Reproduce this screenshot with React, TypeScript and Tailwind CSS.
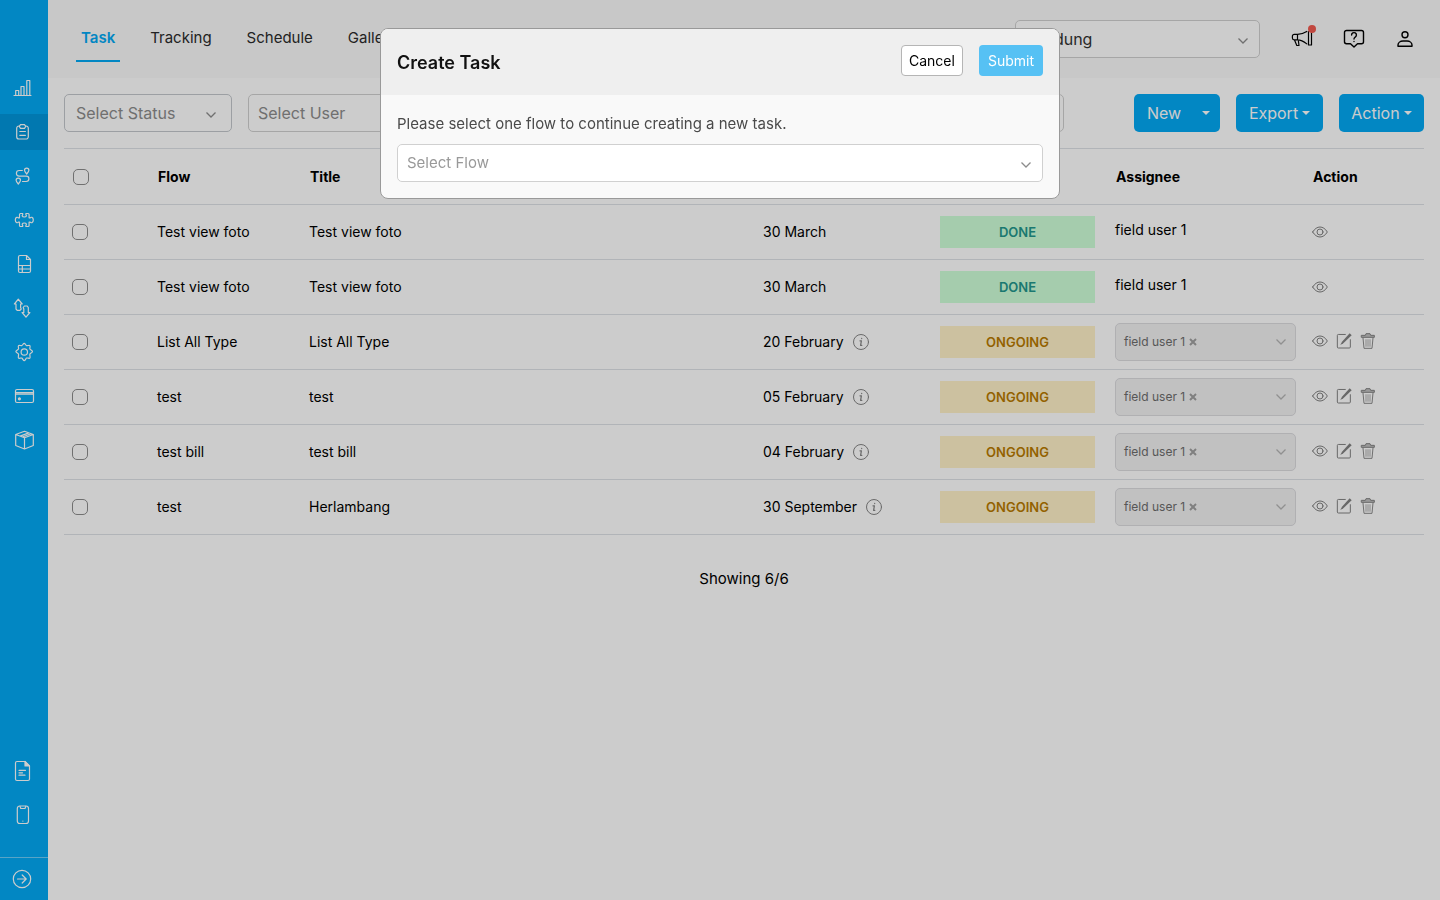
import { useState } from "react";
import type { ReactNode } from "react";
import clsx from "clsx";

interface Task {
  id: number;
  flow: string;
  title: string;
  date: string;
  status: "DONE" | "ONGOING";
  assignee: string;
}

const tasks: Task[] = [
  { id: 1, flow: "Test view foto", title: "Test view foto", date: "30 March", status: "DONE", assignee: "field user 1" },
  { id: 2, flow: "Test view foto", title: "Test view foto", date: "30 March", status: "DONE", assignee: "field user 1" },
  { id: 3, flow: "List All Type", title: "List All Type", date: "20 February", status: "ONGOING", assignee: "field user 1" },
  { id: 4, flow: "test", title: "test", date: "05 February", status: "ONGOING", assignee: "field user 1" },
  { id: 5, flow: "test bill", title: "test bill", date: "04 February", status: "ONGOING", assignee: "field user 1" },
  { id: 6, flow: "test", title: "Herlambang", date: "30 September", status: "ONGOING", assignee: "field user 1" },
];

const tabs = ["Task", "Tracking", "Schedule", "Gallery"];

function Icon({ children, className = "size-6" }: { children: ReactNode; className?: string }) {
  return (
    <svg
      viewBox="0 0 24 24"
      fill="none"
      stroke="currentColor"
      strokeWidth="1.2"
      strokeLinecap="round"
      strokeLinejoin="round"
      aria-hidden="true"
      className={clsx("shrink-0", className)}
    >
      {children}
    </svg>
  );
}

const mainMenu = [
  {
    name: "Dashboard",
    icon: <path d="M2 19.5h17M3.7 19.5v-5h3v5M9 19.5v-9h3v9M14.8 19.5v-15h3v15" />,
  },
  {
    name: "Tasks",
    icon: (
      <>
        <path d="M7.5 6H7a2.3 2.3 0 0 0-2.3 2.3v8.4A2.3 2.3 0 0 0 7 19h7a2.3 2.3 0 0 0 2.3-2.3V8.3A2.3 2.3 0 0 0 14 6h-.5" />
        <path d="M8.5 4.7h4l1.200 1.800-1.200 1.800h-4L7.300 6.500zM7.800 11.500h5.600M7.800 15.300h5.600" />
      </>
    ),
  },
  {
    name: "Routes",
    icon: (
      <>
        <path d="M14.7 10c-1.500-1.700-2.200-2.700-2.200-3.700a2.200 2.200 0 0 1 4.400 0c0 1-.7 2-2.200 3.700z" />
        <path d="M6.300 20c-1.500-1.700-2.200-2.700-2.200-3.700a2.200 2.200 0 0 1 4.400 0c0 1-.7 2-2.200 3.700z" />
        <path d="M10.300 6.500H7.200a2.800 2.800 0 0 0 0 5.600h7a2.700 2.700 0 0 1 0 5.400h-3.700" />
      </>
    ),
  },
  {
    name: "Integrations",
    icon: (
      <path d="M8.500 5.500h2.200v1.200c-.8.600-.9 2.300 1.600 2.300s2.400-1.700 1.600-2.300V5.500h2.200a1 1 0 0 1 1 1v3.300h1.100c.6-.8 3.100-1 3.100 2.200s-2.500 3-3.100 2.200h-1.100v3.300a1 1 0 0 1-1 1h-2.200v-1.200c.8-.6.9-2.300-1.600-2.300s-2.400 1.700-1.600 2.300v1.200H8.500a1 1 0 0 1-1-1v-3.300H6.400c-.6.8-3.100 1-3.100-2.200s2.500-3 3.100-2.200h1.100V6.500a1 1 0 0 1 1-1z" />
    ),
  },
  {
    name: "Reports",
    icon: (
      <>
        <path d="M14.5 3.500H8A1.500 1.500 0 0 0 6.500 5v14A1.500 1.500 0 0 0 8 20.500h9a1.500 1.500 0 0 0 1.500-1.500V7.500z" />
        <path d="M14.5 3.500v4h4M6.500 13.500h12M6.500 17h12M10.300 13.500v7" />
      </>
    ),
  },
  {
    name: "Import and export",
    icon: (
      <>
        <path d="M6.300 3.200 10.200 8H8.600v3.500l.6 1.500-1.200 1.300H5.200L4 13V8H2.400z" />
        <path d="m14 21.200-3.900-4.700h1.700V13l-.6-1.500L12.400 10h2.800l1.100 1.500v5h1.600z" />
      </>
    ),
  },
  {
    name: "Settings",
    icon: (
      <>
        <circle cx="12.300" cy="12" r="3.200" />
        <path d="M12.200 3.300c1 0 1.500 2 2.400 2.300.9.400 2.600-.7 3.300 0s-.4 2.400 0 3.300 2.600 1.400 2.600 2.600-2.200 1.700-2.600 2.600.7 3.300 0 4-2.400-.5-3.300 0-1.400 2.500-2.400 2.500-1.500-2.100-2.400-2.500-2.600.7-3.300 0 .4-3.100 0-4-2.600-1.400-2.600-2.600 2.200-1.700 2.600-2.600-.7-2.600 0-3.300 2.400.4 3.300 0 1.400-2.300 2.400-2.300z" />
      </>
    ),
  },
  {
    name: "Billing",
    icon: (
      <>
        <rect x="3.5" y="5.5" width="18" height="13" rx="1.5" />
        <path d="M3.5 8.700h18M3.500 10.200h18" />
        <circle cx="7.4" cy="14.8" r="1" fill="currentColor" />
      </>
    ),
  },
  {
    name: "Inventory",
    icon: (
      <path d="m12.500 3.300 8.800 3.200v11l-8.800 3.500-8.800-3.500v-11zM3.700 6.500l8.800 3.300 8.800-3.300M12.500 9.800V21M8 8.100l8.800-3.200M10.300 9l8.600-3.300" />
    ),
  },
];

const footerMenu = [
  {
    name: "Documents",
    icon: (
      <>
        <path d="M13 2.500H5A1.500 1.500 0 0 0 3.500 4v16A1.500 1.500 0 0 0 5 21.500h11a1.500 1.500 0 0 0 1.500-1.500V7z" />
        <path d="M13 2.500V7h4.500z" fill="currentColor" />
        <path d="M7 11.300h6.500M7 13.800h3.500M7 16.200h6" />
      </>
    ),
  },
  {
    name: "Mobile app",
    icon: (
      <>
        <rect x="5.3" y="3" width="11.2" height="17.5" rx="2.5" />
        <path d="M8 3.300c.3 1.700.7 2.200 1.500 2.200h2.800c.8 0 1.200-.5 1.500-2.200M10.900 18v.1" />
      </>
    ),
  },
];

function ChevronDown({ className }: { className?: string }) {
  return (
    <svg viewBox="0 0 12 12" fill="none" stroke="currentColor" strokeWidth="1.3" aria-hidden="true" className={clsx("size-3", className)}>
      <path d="M1.500 3.500 6 8l4.500-4.500" />
    </svg>
  );
}

function Caret() {
  return (
    <svg viewBox="0 0 8 4" fill="currentColor" aria-hidden="true" className="h-1 w-2">
      <path d="M0 0h8L4 4z" />
    </svg>
  );
}

interface SelectBoxProps {
  label: string;
  className?: string;
  selectClass?: string;
  chevronClass?: string;
}

function SelectBox({ label, className, selectClass, chevronClass = "right-[11px]" }: SelectBoxProps) {
  return (
    <div className={clsx("relative", className)}>
      <select
        aria-label={label}
        className={clsx("block h-[38px] w-full appearance-none rounded-[5px] border", selectClass)}
      >
        <option>{label}</option>
      </select>
      <ChevronDown className={clsx("pointer-events-none absolute top-[15px] text-[#8c8c8c]", chevronClass)} />
    </div>
  );
}

function Checkbox({ label }: { label: string }) {
  return (
    <input
      type="checkbox"
      aria-label={label}
      className="block size-4 appearance-none rounded-[5px] border border-[#8d8d8d] checked:bg-[#03a9f4]"
    />
  );
}

function EyeIcon() {
  return (
    <Icon className="size-4">
      <path strokeWidth="1.5" d="M1 12c3-5 7-7.500 11-7.500S20 7 23 12c-3 5-7 7.500-11 7.500S4 17 1 12z" />
      <circle strokeWidth="1.5" cx="12" cy="12" r="4.5" />
    </Icon>
  );
}

function EditIcon() {
  return (
    <Icon className="size-4">
      <path strokeWidth="1.5" d="M14 2.200H3.500A1.500 1.500 0 0 0 2 3.700V21a1.500 1.500 0 0 0 1.500 1.500H20a1.500 1.500 0 0 0 1.500-1.500V10" />
      <path fill="currentColor" stroke="none" d="m20.500.5 3 3L11 15.500 6.500 18 9 13z" />
    </Icon>
  );
}

function TrashIcon() {
  return (
    <Icon className="size-4">
      <path strokeWidth="1.400" d="M4.500 7.500 6 23h12l1.500-15.500" />
      <path strokeWidth="1" d="M9 10v10M12 10v10M15 10v10" />
      <path strokeWidth="1.500" fill="currentColor" fillOpacity=".5" d="M2.500 3.500h5.500l1-2.500h6l1 2.500h5.500v3h-19z" />
    </Icon>
  );
}

function Sidebar() {
  return (
    <aside className="flex w-12 shrink-0 flex-col bg-[#03a9f4] pt-[70px] text-white">
      <nav className="flex flex-1 flex-col gap-2" aria-label="Main">
        {mainMenu.map((item) => (
          <a
            key={item.name}
            href="#"
            aria-label={item.name}
            className={clsx("flex h-9 items-center justify-center", item.name === "Tasks" && "bg-[#0297dc]")}
          >
            <Icon>{item.icon}</Icon>
          </a>
        ))}
      </nav>
      <nav className="mb-6 flex flex-col gap-2" aria-label="Resources">
        {footerMenu.map((item) => (
          <a key={item.name} href="#" aria-label={item.name} className="flex h-9 items-center justify-center">
            <Icon>{item.icon}</Icon>
          </a>
        ))}
      </nav>
      <button aria-label="Expand menu" className="flex h-[43px] items-center justify-center border-t border-[#6ecdf8]">
        <Icon>
          <circle cx="10" cy="12" r="8.7" />
          <path d="M5.500 12H14M10.200 8l4 4-4 4" />
        </Icon>
      </button>
    </aside>
  );
}

function Header() {
  return (
    <header className="flex h-[78px] items-center bg-[#fafafa] pr-[22px] pl-7">
      <nav className="flex flex-1 gap-[25px] text-[15px]" aria-label="Sections">
        {tabs.map((tab) => (
          <a
            key={tab}
            href="#"
            className={clsx(
              "flex h-[46px] items-center border-b-2 px-[5px]",
              tab === "Task" ? "border-[#03a9f4] font-semibold text-[#03a9f4]" : "border-transparent text-[#2b2b2b]"
            )}
          >
            {tab}
          </a>
        ))}
      </nav>
      <SelectBox label="Bandung" className="mr-[30px] w-[245px]" selectClass="border-[#d0d0d0] bg-white px-[9px] text-[#333]" />
      <div className="flex gap-7 text-black">
        <button aria-label="Announcements" className="relative">
          <Icon>
            <path d="M16.800 4.500c-3 1.800-6 2.900-9.300 2.900H4.200a1.800 1.800 0 0 0-1.800 1.800v1.900a1.800 1.800 0 0 0 1.800 1.800h3.300c3.300 0 6.300 1.600 9.300 4M7.500 7.400v5.500M4.500 13l2.300 5.500H9L8.300 13M18.500 4.500v13.500M21.500 6v12M18.500 18h3" />
          </Icon>
          <span className="absolute -top-[2px] -right-[2px] size-2 rounded-full bg-[#f25b50]" />
        </button>
        <button aria-label="Help">
          <Icon>
            <path strokeWidth="1.4" d="M4.500 3.500h15a2 2 0 0 1 2 2v9.200a2 2 0 0 1-2 2h-4L12 20l-3.500-3.300h-4a2 2 0 0 1-2-2V5.500a2 2 0 0 1 2-2z" />
            <path strokeWidth="1.4" d="M9.600 8a2.400 2.400 0 1 1 3.600 2.100c-.8.500-1.200.9-1.200 2M12 14.500v.1" />
          </Icon>
        </button>
        <button aria-label="Account">
          <Icon>
            <circle strokeWidth="1.4" cx="11" cy="7.700" r="3" />
            <path strokeWidth="1.4" d="M4 19.300v-1.200c0-2.300 2.200-4.100 5-4.100h4c2.800 0 5 1.800 5 4.100v1.200z" />
          </Icon>
        </button>
      </div>
    </header>
  );
}

function TaskRow({ task }: { task: Task }) {
  const done = task.status === "DONE";
  return (
    <tr className="h-[55px] border-b border-[#dee2e6]">
      <td className="px-2"><Checkbox label={`Select ${task.title}`} /></td>
      <td className="px-2">{task.flow}</td>
      <td className="px-2">{task.title}</td>
      <td className="px-2">
        <div className="flex items-center gap-[7px]">
          {task.date}
          {!done && (
            <Icon className="size-5 text-[#858585]">
              <circle cx="12" cy="12" r="9" />
              <path strokeWidth="1.5" d="M10.800 10.500h1.700l-1 5.500h1.500M12.800 7.500v.3" />
            </Icon>
          )}
        </div>
      </td>
      <td className="pr-3 pl-2">
        <div
          className={clsx(
            "flex h-8 items-center justify-center text-[13px] font-semibold",
            done ? "bg-[#cfffd9] text-[#22968c]" : "bg-[#fff2c9] text-[#b87a00]"
          )}
        >
          {task.status}
        </div>
      </td>
      <td className="px-2">
        {done ? (
          <span className="block pb-1">{task.assignee}</span>
        ) : (
          <div className="flex h-[38px] items-center justify-between rounded-[5px] border border-[#dcdcdf] bg-[#f2f2f2] px-2 text-xs text-[#6d6d6d]">
            <span className="flex items-center gap-1">
              {task.assignee}
              <button aria-label={`Remove ${task.assignee}`} className="text-[#a0a0a0]">
                <svg viewBox="0 0 8 8" stroke="currentColor" strokeWidth="2" className="size-2" aria-hidden="true">
                  <path d="m1 1 6 6M7 1 1 7" />
                </svg>
              </button>
            </span>
            <ChevronDown className="text-[#b5b5b5]" />
          </div>
        )}
      </td>
      <td className="px-2">
        <div className={clsx("flex gap-2 text-[#828282]", !done && "pb-[2px]")}>
          <button aria-label="View"><EyeIcon /></button>
          {!done && (
            <>
              <button aria-label="Edit"><EditIcon /></button>
              <button aria-label="Delete"><TrashIcon /></button>
            </>
          )}
        </div>
      </td>
    </tr>
  );
}

function CreateTaskModal({ onClose }: { onClose: () => void }) {
  return (
    <div className="fixed inset-0 flex items-start justify-center bg-black/20 pt-7">
      <div
        role="dialog"
        aria-modal="true"
        aria-labelledby="create-task-title"
        className="w-full max-w-[680px] overflow-hidden rounded-lg border border-[#999] bg-[#f9f9f9]"
      >
        <div className="flex h-[66px] items-start justify-between bg-[#efefef] px-4 pt-4">
          <h2 id="create-task-title" className="text-lg leading-9 font-semibold text-[#111]">Create Task</h2>
          <div className="flex gap-4 text-sm">
            <button onClick={onClose} className="h-[31px] rounded border border-[#b5b5b5] bg-white px-[7px] text-black">
              Cancel
            </button>
            <button disabled className="h-[31px] rounded bg-[#56c1f4] px-[9px] text-white">
              Submit
            </button>
          </div>
        </div>
        <div className="px-4 pt-[17px] pb-4">
          <p className="mb-2 text-[15px] leading-6 text-[#4a4a4a]">Please select one flow to continue creating a new task.</p>
          <SelectBox label="Select Flow" selectClass="border-[#d0d0d0] bg-white px-[9px] text-[15px] text-[#999]" />
        </div>
      </div>
    </div>
  );
}

export default function App() {
  const [showModal, setShowModal] = useState(true);

  return (
    <div className="flex min-h-screen bg-white font-['Inter','Liberation_Sans',sans-serif] text-base text-black">
      <Sidebar />
      <div className="min-w-0 flex-1">
        <Header />
        <main className="px-4 pt-4">
          {/* FILTERS */}
          <div className="flex gap-4">
            <SelectBox
              label="Select Status"
              className="w-[168px]"
              selectClass="border-[#c3c7cc] bg-white px-[11px] text-[#8c8c8c]"
              chevronClass="right-[15px]"
            />
            <SelectBox label="Select User" className="mr-[54px] flex-1" selectClass="border-[#d0d0d0] bg-white px-[9px] text-[#8c8c8c]" />
            <button
              onClick={() => setShowModal(true)}
              className="flex h-[38px] w-[86px] items-center justify-between rounded-[5px] bg-[#03a9f4] pr-[10px] pl-[13px] text-white"
            >
              New <Caret />
            </button>
            <button className="flex h-[38px] w-[87px] items-center justify-center gap-1 rounded-[5px] bg-[#03a9f4] text-white">
              Export <Caret />
            </button>
            <button className="flex h-[38px] w-[85px] items-center justify-center gap-1 rounded-[5px] bg-[#03a9f4] text-white">
              Action <Caret />
            </button>
          </div>

          {/* TASK LIST */}
          <table className="mt-4 w-full table-fixed text-left text-sm">
            <thead>
              <tr className="h-14 border-y border-[#dee2e6]">
                <th className="w-[85px] px-[9px]"><Checkbox label="Select all tasks" /></th>
                <th className="w-[152px] px-[9px] font-bold">Flow</th>
                <th className="px-[9px] font-bold">Title</th>
                <th className="w-[177px] px-[9px] font-bold">Date</th>
                <th className="w-[175px] px-[9px] font-bold">Status</th>
                <th className="w-[197px] px-[9px] font-bold">Assignee</th>
                <th className="w-[120px] px-[9px] font-bold">Action</th>
              </tr>
            </thead>
            <tbody>
              {tasks.map((task) => (
                <TaskRow key={task.id} task={task} />
              ))}
            </tbody>
          </table>
          <p className="py-8 text-center text-[15px] leading-6">Showing {tasks.length}/{tasks.length}</p>
        </main>
      </div>
      {showModal && <CreateTaskModal onClose={() => setShowModal(false)} />}
    </div>
  );
}
